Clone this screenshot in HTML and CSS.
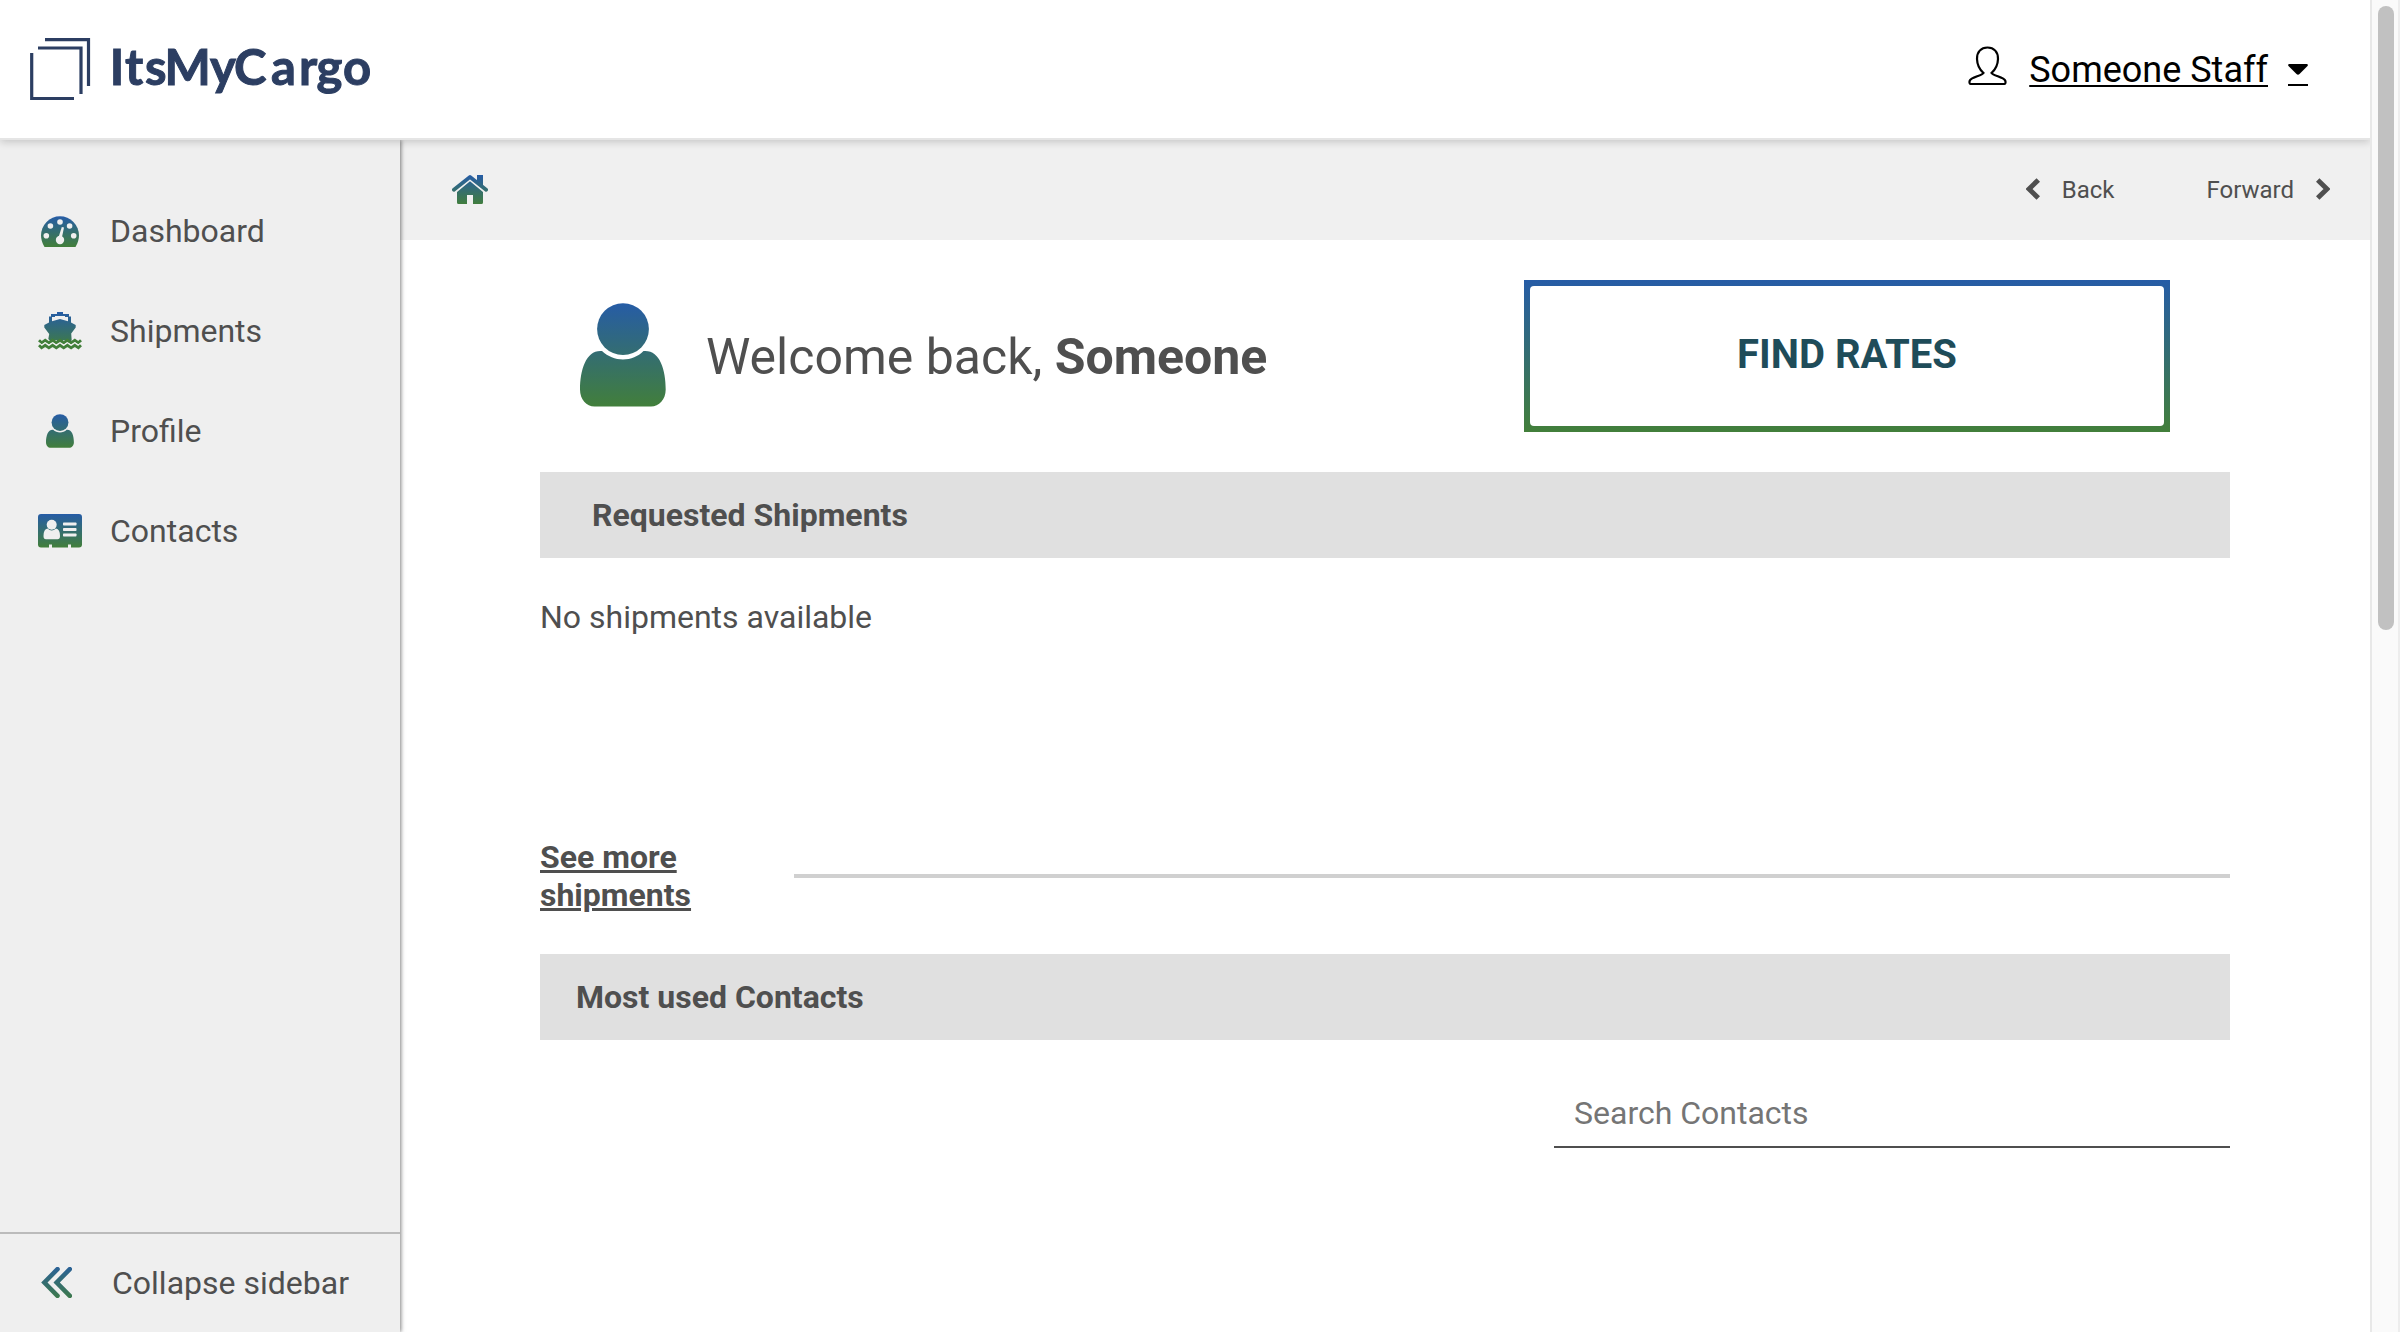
FILE: index.html
```html
<!DOCTYPE html>
<html lang="en">
<head>
<meta charset="utf-8">
<title>ItsMyCargo</title>
<link rel="stylesheet" href="styles.css">
</head>
<body>
<svg class="defs" width="0" height="0" aria-hidden="true">
  <defs>
    <linearGradient id="brand" x1="0" y1="0" x2="0" y2="1"><stop offset="0" stop-color="#265ca6"/><stop offset="1" stop-color="#427f3a"/></linearGradient>
    <linearGradient id="home-fill" gradientUnits="userSpaceOnUse" x1="0" y1="0" x2="0" y2="30"><stop offset="0" stop-color="#265ca6"/><stop offset="1" stop-color="#427f3a"/></linearGradient>
    <linearGradient id="ship-fill" gradientUnits="userSpaceOnUse" x1="0" y1="0" x2="0" y2="37"><stop offset="0" stop-color="#265ca6"/><stop offset="1" stop-color="#427f3a"/></linearGradient>
    <linearGradient id="person-fill" gradientUnits="userSpaceOnUse" x1="0" y1="0" x2="0" y2="104"><stop offset="0" stop-color="#265ca6"/><stop offset="1" stop-color="#427f3a"/></linearGradient>
    <linearGradient id="collapse-fill" gradientUnits="userSpaceOnUse" x1="0" y1="-6" x2="0" y2="38"><stop offset="0" stop-color="#265ca6"/><stop offset="1" stop-color="#427f3a"/></linearGradient>
    <symbol id="person" viewBox="0 0 86 104">
      <circle cx="43" cy="26.1" r="25.9"/>
      <path d="M22 48C28 53.500 35 56.500 43 56.500S58 53.500 63.500 48C79.500 46.500 85.700 66 85.700 86.500C85.700 96.500 79 103.600 71 103.600H14.500C6.500 103.600 0 96.500 0 86.500C0 66 6.500 46.500 22 48Z"/>
    </symbol>
  </defs>
</svg>
<div class="window">
  <div class="app">
    <header class="topbar">
      <svg class="logo" width="350" height="68" viewBox="0 0 350 68" role="img">
        <g class="logo-mark">
          <path d="M15 1.600H58.500V48"/>
          <path d="M8 10H51V56"/>
          <path d="M1.700 15V60.500H44"/>
        </g>
        <text class="logo-text" x="79.700 95 115 134.500 180 204 241 269 286.500 313" y="46.500">ItsMyCargo</text>
      </svg>
      <div class="user">
        <svg class="user-icon" width="39" height="40" viewBox="0 0 39 40"><path d="M19.500 1.500C13 1.500 8.800 6 9 13C9.200 20 11.500 23.500 15.500 27C14 29.500 3 31.500 1.800 34.500C1.200 36 1.400 38 2.500 38H36.500C37.600 38 37.800 36 37.200 34.500C36 31.500 25 29.500 23.500 27C27.500 23.500 29.800 20 30 13C30.200 6 26 1.500 19.500 1.500Z"/></svg>
        <span class="user-name">Someone Staff</span>
        <span class="caret"><svg width="20" height="11" viewBox="0 0 20 11"><path d="M1 0H19Q20.500 .5 19.500 2L11.500 10Q10 11.500 8.500 10L.5 2Q-.5 .5 1 0Z"/></svg></span>
      </div>
    </header>
    <div class="body">
      <nav class="sidebar">
        <ul class="menu">
          <li class="item"><span class="item-icon"><svg width="38" height="31" viewBox="0 0 38 31"><path fill="url(#brand)" d="M3.500 31Q0 25 0 19.500A19 19.200 0 0 1 38 19.500Q38 25 34.500 31Z"/><g class="cut"><circle cx="19" cy="6" r="2.800"/><circle cx="9.400" cy="10" r="2.800"/><circle cx="28.600" cy="10" r="2.800"/><circle cx="5.300" cy="19.700" r="2.800"/><circle cx="32.700" cy="19.700" r="2.800"/><circle cx="19" cy="24" r="4.200"/><path d="M20.800 11L23 11.500L20.800 22L17.600 21Z"/></g></svg></span>Dashboard</li>
          <li class="item"><span class="item-icon"><svg width="44" height="38" viewBox="0 0 44 38"><path fill="url(#ship-fill)" d="M19 0H25V2H31V4.500H33V10.500L37.700 13V15.500L33.200 21.500L33.700 28.500L30 31L26 28L22 31L18 28L14 31L10.300 27L11.200 22L6.300 15.500V13L11 10.500V4.500H13V2H19ZM14 9.300L22 7L30 9.300V5H27V4H17V5H14Z"/><path class="wave" d="M1 28.300L3.600 30.800L7.200 28.300L10.900 30.800L14.600 28.300L18.300 30.800L22 28.300L25.700 30.800L29.400 28.300L33.100 30.800L36.800 28.300L40.400 30.800L43 28.300"/><path class="wave cut-wave" d="M1 31.200L3.600 33.700L7.200 31.200L10.900 33.700L14.600 31.200L18.300 33.700L22 31.200L25.700 33.700L29.400 31.200L33.100 33.700L36.800 31.200L40.400 33.700L43 31.200"/><path class="wave" d="M1 33.300L3.600 35.800L7.200 33.300L10.900 35.800L14.600 33.300L18.300 35.800L22 33.300L25.700 35.800L29.400 33.300L33.100 35.800L36.800 33.300L40.400 35.800L43 33.300"/></svg></span>Shipments</li>
          <li class="item"><span class="item-icon"><svg width="28" height="34"><use href="#person" fill="url(#person-fill)"/></svg></span>Profile</li>
          <li class="item"><span class="item-icon"><svg width="44" height="34" viewBox="0 0 44 34"><path fill="url(#brand)" d="M3 0H41Q44 0 44 3V30.500Q44 33.500 41 33.500H33V30.500H30V33.500H14V30.500H11V33.500H3Q0 33.500 0 30.500V3Q0 0 3 0Z"/><g class="cut"><circle cx="13.700" cy="10.700" r="5"/><path d="M9.500 14.600Q13.700 18.500 18 14.600Q22 15.500 22 22Q22 25.200 19.500 25.200H8Q5.500 25.200 5.500 22Q5.500 15.500 9.500 14.600Z"/><rect x="25" y="8.500" width="13.500" height="3" rx=".7"/><rect x="25" y="14" width="13.500" height="3" rx=".7"/><rect x="25" y="19.500" width="13.500" height="3" rx=".7"/></g></svg></span>Contacts</li>
        </ul>
        <div class="collapse"><svg width="31" height="31" viewBox="0 0 31 31"><path d="M16.500 2.200L3.400 15.500L16.500 28.800M28.800 2.200L15.700 15.500L28.800 28.800"/></svg><span>Collapse sidebar</span></div>
      </nav>
      <main class="main">
        <div class="crumbs">
          <svg class="home" width="36" height="29" viewBox="0 0 36 29"><path class="roof" d="M1.900 14.700L18 2L34.100 14.700"/><path fill="url(#home-fill)" d="M25 0H31V11L25 6ZM18 6.300L31 17V27.500Q31 29 29.500 29H21V20H15V29H6.500Q5 29 5 27.500V17Z"/></svg>
          <div class="history">
            <span class="step"><svg width="14" height="22" viewBox="0 0 14 22"><path d="M12.300 2L3 11L12.300 20"/></svg>Back</span>
            <span class="step">Forward<svg width="14" height="22" viewBox="0 0 14 22"><path d="M1.700 2L11 11L1.700 20"/></svg></span>
          </div>
        </div>
        <div class="content">
          <section class="welcome">
            <svg class="avatar" width="86" height="104"><use href="#person" fill="url(#person-fill)"/></svg>
            <h1 class="greeting">Welcome back, <b>Someone</b></h1>
            <button class="find"><span>FIND RATES</span></button>
          </section>
          <h2 class="section-title requested">Requested Shipments</h2>
          <p class="empty">No shipments available</p>
          <div class="more"><a class="more-link">See more shipments</a><hr class="rule"></div>
          <h2 class="section-title">Most used Contacts</h2>
          <input class="search" type="text" placeholder="Search Contacts">
        </div>
      </main>
    </div>
  </div>
  <div class="scrollbar"><div class="thumb"></div></div>
</div>
</body>
</html>
```
FILE: styles.css
```css
* { box-sizing: border-box; }
body { margin: 0; background: #fff; color: #4f4f4f; font: 32px/38px Roboto, sans-serif; overflow: hidden; }
.defs { position: absolute; }
.window { display: flex; width: 2400px; height: 1332px; }
.app { flex: 1; display: flex; flex-direction: column; overflow: hidden; }
.topbar { position: relative; z-index: 2; flex: none; display: flex; justify-content: space-between; align-items: flex-start; height: 140px; padding: 38px 62px 0 30px; background: #fff; border-bottom: 2px solid #e5e5e5; box-shadow: 0 2px 8px rgba(0,0,0,.18); }
.logo { overflow: visible; }
.logo-mark { fill: none; stroke: #2c3e62; stroke-width: 3.2; }
.logo-text { font: 700 49px Lato, sans-serif; fill: #2c3e62; stroke: #2c3e62; stroke-width: 1; }
.user { display: flex; align-items: flex-start; padding-top: 8px; color: #000; font-size: 36px; line-height: 42px; }
.user-icon { fill: none; stroke: #000; stroke-width: 2.2; margin-right: 22px; }
.user-name { margin-top: 3px; text-decoration: underline; text-decoration-thickness: 2px; text-underline-offset: 3px; }
.caret { display: flex; width: 20px; height: 22px; margin: 18px 0 0 20px; border-bottom: 2px solid #000; }
.body { flex: 1; display: flex; min-height: 0; }
.sidebar { position: relative; z-index: 1; flex: none; width: 400px; display: flex; flex-direction: column; background: #efefef; box-shadow: 1px 0 4px rgba(0,0,0,.5); }
.menu { flex: 1; list-style: none; margin: 0; padding: 41px 0 0; }
.item { display: flex; align-items: center; height: 100px; }
.item-icon { display: flex; justify-content: center; width: 120px; margin-right: -10px; }
.cut { fill: #efefef; }
.wave { fill: none; stroke: #427f3a; stroke-width: 2.8; }
.cut-wave { stroke: #efefef; stroke-width: 1.8; }
.collapse { display: flex; align-items: center; gap: 40px; height: 100px; padding-left: 41px; border-top: 2px solid #bbb; }
.collapse svg { margin-bottom: 2px; fill: none; stroke: url(#collapse-fill); stroke-width: 4.6; stroke-linecap: round; }
.main { flex: 1; min-width: 0; }
.crumbs { display: flex; align-items: center; justify-content: space-between; height: 100px; padding: 0 40px 0 52px; background: #f0f0f0; }
.home { margin-bottom: 1px; }
.roof { fill: none; stroke: url(#home-fill); stroke-width: 3.8; stroke-linecap: round; stroke-linejoin: round; }
.history { display: flex; gap: 92px; font-size: 24px; }
.step { display: flex; align-items: center; gap: 22px; }
.step svg { margin-bottom: 2px; fill: none; stroke: #4f4f4f; stroke-width: 5; }
.content { padding: 40px 140px 0; }
.welcome { display: flex; align-items: center; height: 152px; padding: 0 60px 0 40px; }
.avatar { margin-bottom: 2px; }
.greeting { margin: 2px auto 0 40px; font-size: 50px; line-height: 60px; font-weight: 400; }
.find { width: 646px; height: 152px; padding: 6px; border: 0; background: linear-gradient(#265ca6, #427f3a); }
.find span { display: flex; align-items: center; justify-content: center; height: 140px; padding-bottom: 3px; border-radius: 4px; background: #fff; color: #1f4c59; font: 700 40px Roboto, sans-serif; }
.section-title { display: flex; align-items: center; height: 86px; margin: 0; padding: 0 36px; background: #e0e0e0; font-size: 32px; font-weight: 700; }
.requested { margin-top: 40px; padding-left: 52px; }
.empty { height: 278px; margin: 0; padding-top: 40px; }
.more { display: flex; align-items: center; height: 80px; margin-bottom: 38px; }
.more-link { width: 254px; padding-right: 60px; font-weight: 700; text-decoration: underline; }
.rule { flex: 1; height: 4px; margin: 0; border: 0; background: #d0d0d0; }
.search { display: block; width: 676px; height: 68px; margin: 40px 0 0 auto; padding: 0 20px; border: 0; border-bottom: 2px solid #4f4f4f; font: 32px Roboto, sans-serif; outline: 0; }
.search::placeholder { color: #757575; }
.scrollbar { width: 30px; padding: 6px 4px 0 6px; background: #fafafa; border-left: 2px solid #e8e8e8; border-right: 2px solid #ededed; }
.thumb { width: 16px; height: 624px; border-radius: 8px; background: #c1c1c1; }
```
